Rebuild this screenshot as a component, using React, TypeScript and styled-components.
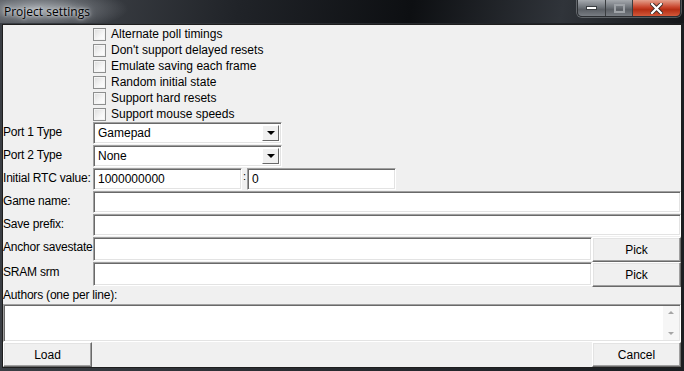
import styled, { createGlobalStyle } from "styled-components";

const GlobalStyle = createGlobalStyle`
  html, body {
    margin: 0;
    padding: 0;
    background: #202327;
  }
  body {
    font-family: "Liberation Sans", Arial, sans-serif;
    font-size: 12px;
    color: #000;
  }
`;

const Window = styled.div`
  width: 684px;
  height: 371px;
  display: flex;
  flex-direction: column;
  background: linear-gradient(90deg, #3a3e44 0%, #2a2d32 40%, #1b1e22 100%);
  overflow: hidden;
`;

const TitleBar = styled.div`
  height: 23px;
  flex: none;
  display: flex;
  align-items: flex-start;
  justify-content: space-between;
  background:
    radial-gradient(ellipse 90px 22px at 38px 9px, rgba(170, 175, 180, 0.95) 0%, rgba(120, 124, 130, 0.6) 55%, rgba(0, 0, 0, 0) 100%),
    linear-gradient(100deg, #4b4f55 0%, #202328 35%, #0d0f12 60%, #30343a 82%, #15171a 100%);
`;

const Title = styled.div`
  padding: 3px 0 0 4px;
  font-family: "Open Sans", "Liberation Sans", sans-serif;
  font-size: 12px;
  color: #000;
  text-shadow: 0 0 6px #dfe2e6, 0 0 3px #dfe2e6;
`;

const CaptionButtons = styled.div`
  display: flex;
  margin-right: 3px;
  border: 1px solid #2c2f33;
  border-top: none;
  border-radius: 0 0 5px 5px;
  overflow: hidden;
  box-shadow: 0 0 0 1px rgba(200, 205, 210, 0.35);
`;

const CaptionButton = styled.div<{ $close?: boolean; $w: number }>`
  width: ${(p) => p.$w}px;
  height: 16px;
  display: flex;
  align-items: center;
  justify-content: center;
  background: ${(p) =>
    p.$close
      ? "linear-gradient(180deg, #e4a08c 0%, #c9452c 45%, #b52e14 60%, #d2583a 100%)"
      : "linear-gradient(180deg, #a5a9ae 0%, #6f747a 45%, #5b5f65 60%, #787d83 100%)"};
  border-left: ${(p) => (p.$close ? "1px solid #3a3d40" : "1px solid #3a3d40")};
  &:first-child {
    border-left: none;
  }
`;

const Client = styled.div`
  flex: 1;
  margin: 1px 2px 4px 2px;
  border: 1px solid #1e1e1e;
  background: #f0f0f0;
  display: flex;
  flex-direction: column;
`;

const Checks = styled.div`
  display: flex;
  flex-direction: column;
  padding: 1px 0 0 90px;
`;

const CheckRow = styled.label`
  height: 16px;
  display: flex;
  align-items: center;
  gap: 5px;
  font-size: 12px;
`;

const CheckBox = styled.span`
  width: 11px;
  height: 11px;
  border: 1px solid #8e8f8f;
  background: linear-gradient(135deg, #dcdcdc 0%, #f6f6f6 60%, #ffffff 100%);
  box-shadow: inset 0 0 0 1px #f4f4f4;
`;

const Row = styled.div<{ $h: number }>`
  height: ${(p) => p.$h}px;
  display: flex;
  align-items: stretch;
`;

const Label = styled.div`
  width: 90px;
  flex: none;
  padding-top: 3px;
  white-space: nowrap;
  font-size: 12px;
  letter-spacing: -0.2px;
`;

const Field = styled.div<{ $w?: number }>`
  ${(p) => (p.$w ? `width: ${p.$w}px; flex: none;` : "flex: 1;")}
  background: #fff;
  border-top: 1px solid #a0a0a0;
  border-left: 1px solid #a0a0a0;
  border-right: 1px solid #fff;
  border-bottom: 1px solid #fff;
  box-shadow: inset 1px 1px 0 #696969, inset -1px -1px 0 #e3e3e3;
  display: flex;
  align-items: center;
  padding-left: 4px;
  font-size: 12px;
  margin-bottom: 1px;
  box-sizing: border-box;
`;

const Combo = styled(Field)`
  justify-content: space-between;
  padding: 2px;
  padding-left: 4px;
`;

const ComboArrow = styled.div`
  width: 15px;
  align-self: stretch;
  background: #f0f0f0;
  border-top: 1px solid #fff;
  border-left: 1px solid #fff;
  border-right: 1px solid #696969;
  border-bottom: 1px solid #696969;
  display: flex;
  align-items: center;
  justify-content: center;
  &::after {
    content: "";
    border-left: 4px solid transparent;
    border-right: 4px solid transparent;
    border-top: 4px solid #000;
  }
`;

const Colon = styled.div`
  width: 5px;
  display: flex;
  align-items: flex-start;
  justify-content: center;
  font-size: 11px;
  padding-top: 2px;
`;

const Button = styled.div<{ $w: number }>`
  width: ${(p) => p.$w}px;
  flex: none;
  background: #f0f0f0;
  border-top: 1px solid #fff;
  border-left: 1px solid #fff;
  border-right: 1px solid #696969;
  border-bottom: 1px solid #696969;
  box-shadow: inset -1px -1px 0 #a0a0a0, inset 1px 1px 0 #e3e3e3;
  display: flex;
  align-items: center;
  justify-content: center;
  font-size: 12px;
  box-sizing: border-box;
`;

const SectionLabel = styled.div`
  height: 16px;
  padding-top: 1px;
  font-size: 12px;
  letter-spacing: -0.2px;
`;

const TextArea = styled(Field)`
  height: 38px;
  flex: none;
  align-items: stretch;
  justify-content: flex-end;
  padding: 1px;
  margin-bottom: 0;
`;

const ScrollBar = styled.div`
  width: 16px;
  display: flex;
  flex-direction: column;
  justify-content: space-between;
  align-items: center;
  background: #f6f6f6;
  padding: 5px 0;
  box-sizing: border-box;
`;

const Arrow = styled.span<{ $up?: boolean }>`
  border-left: 3px solid transparent;
  border-right: 3px solid transparent;
  ${(p) => (p.$up ? "border-bottom: 3px solid #a6a6a6;" : "border-top: 3px solid #a6a6a6;")}
`;

const Footer = styled.div`
  height: 25px;
  display: flex;
  justify-content: space-between;
`;

const options = [
  "Alternate poll timings",
  "Don't support delayed resets",
  "Emulate saving each frame",
  "Random initial state",
  "Support hard resets",
  "Support mouse speeds",
];

export default function App() {
  return (
    <>
      <GlobalStyle />
      <Window>
        <TitleBar>
          <Title>Project settings</Title>
          <CaptionButtons>
            <CaptionButton $w={27}>
              <svg width="11" height="4" viewBox="0 0 11 4">
                <rect x="0.5" y="0.5" width="10" height="3" fill="#fff" stroke="#3b3e42" />
              </svg>
            </CaptionButton>
            <CaptionButton $w={26}>
              <svg width="11" height="9" viewBox="0 0 11 9">
                <rect x="1" y="1" width="9" height="7" fill="none" stroke="#9ea2a7" strokeWidth="2" />
              </svg>
            </CaptionButton>
            <CaptionButton $close $w={47}>
              <svg width="13" height="11" viewBox="0 0 13 11">
                <path d="M2 1 L11 10 M11 1 L2 10" stroke="#3b2a26" strokeWidth="4" strokeLinecap="square" />
                <path d="M2 1 L11 10 M11 1 L2 10" stroke="#fff" strokeWidth="2.2" strokeLinecap="square" />
              </svg>
            </CaptionButton>
          </CaptionButtons>
        </TitleBar>
        <Client>
          <Checks>
            {options.map((o) => (
              <CheckRow key={o}>
                <CheckBox />
                {o}
              </CheckRow>
            ))}
          </Checks>
          <Row $h={23}>
            <Label>Port 1 Type</Label>
            <Combo $w={189}>
              Gamepad
              <ComboArrow />
            </Combo>
          </Row>
          <Row $h={23}>
            <Label>Port 2 Type</Label>
            <Combo $w={189}>
              None
              <ComboArrow />
            </Combo>
          </Row>
          <Row $h={23}>
            <Label>Initial RTC value:</Label>
            <Field $w={149}>1000000000</Field>
            <Colon>:</Colon>
            <Field $w={149}>0</Field>
          </Row>
          <Row $h={23}>
            <Label>Game name:</Label>
            <Field />
          </Row>
          <Row $h={23}>
            <Label>Save prefix:</Label>
            <Field />
          </Row>
          <Row $h={25}>
            <Label>Anchor savestate</Label>
            <Field />
            <Button $w={89}>Pick</Button>
          </Row>
          <Row $h={25}>
            <Label>SRAM srm</Label>
            <Field />
            <Button $w={89}>Pick</Button>
          </Row>
          <SectionLabel>Authors (one per line):</SectionLabel>
          <TextArea>
            <ScrollBar>
              <Arrow $up />
              <Arrow />
            </ScrollBar>
          </TextArea>
          <Footer>
            <Button $w={89}>Load</Button>
            <Button $w={89}>Cancel</Button>
          </Footer>
        </Client>
      </Window>
    </>
  );
}
